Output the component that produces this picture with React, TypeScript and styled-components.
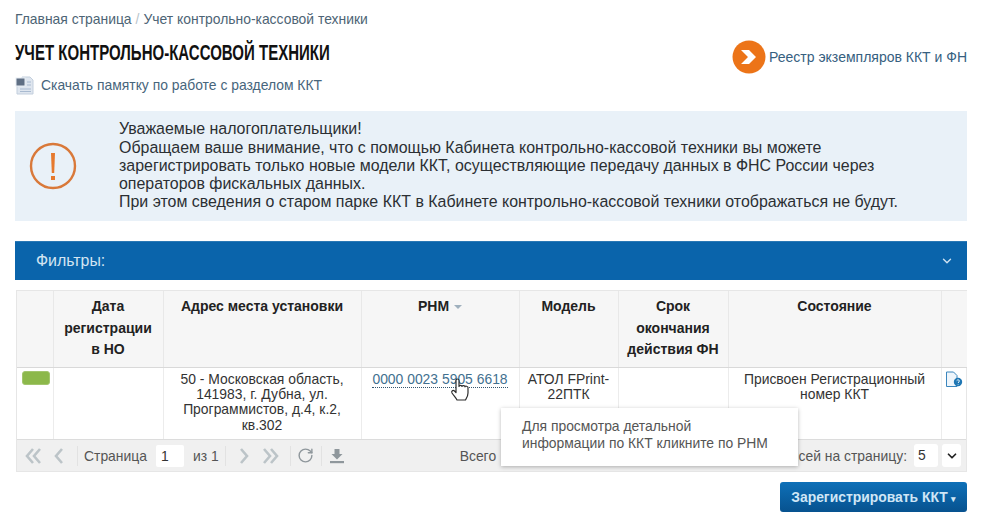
import { FC } from 'react';
import styled, { createGlobalStyle } from 'styled-components';
import { ChevronDown, RotateCw } from 'lucide-react';

const GlobalStyle = createGlobalStyle`
    html, body {
        margin: 0;
        padding: 0;
        background: #fff;
    }
    body {
        width: 983px;
        height: 523px;
        overflow: hidden;
        font-family: "Liberation Sans", Arial, sans-serif;
        color: #333;
    }
`;

const Page = styled.div`
    position: relative;
    box-sizing: border-box;
    height: 523px;
    padding: 11px 16px 0 15px;
`;

const Breadcrumbs = styled.div`
    font-size: 13.9px;
    line-height: 16px;
    color: #4d6475;
    span {
        color: #b9c4cc;
        margin: 0 4px;
    }
`;

const TitleRow = styled.div`
    display: flex;
    justify-content: space-between;
    align-items: center;
    margin-top: 14px;
    height: 32px;
`;

const Title = styled.h1`
    margin: 0 0 8px;
    font-size: 22px;
    font-weight: 700;
    line-height: 24px;
    color: #111;
    white-space: nowrap;
    transform: scaleX(0.683);
    transform-origin: left center;
`;

const RegistryLink = styled.a`
    display: flex;
    align-items: center;
    gap: 3px;
    font-size: 14px;
    color: #36607f;
`;

const DocLink = styled.a`
    display: flex;
    align-items: center;
    gap: 7px;
    margin-top: 0;
    height: 24px;
    font-size: 13.9px;
    color: #47657c;
`;

const InfoBox = styled.div`
    display: flex;
    align-items: center;
    box-sizing: border-box;
    height: 110px;
    margin-top: 14px;
    background: #e9f1f8;
    font-size: 15.95px;
    line-height: 18.2px;
    color: #2b2f33;
`;

const InfoIcon = styled.div`
    display: flex;
    justify-content: center;
    width: 76px;
    flex: none;
`;

const InfoText = styled.div`
    padding: 0 0 0 28px;
    white-space: nowrap;
`;

const FiltersBar = styled.div`
    display: flex;
    align-items: center;
    justify-content: space-between;
    box-sizing: border-box;
    height: 39px;
    margin-top: 20px;
    padding: 0 13px 0 21px;
    background: #0a64ab;
    border-top: 1px solid #2a78b5;
    color: #d3e4f2;
    font-size: 15.9px;
`;

const TableWrap = styled.div`
    margin: 10px 0 0 1px;
    border: 1px solid #e6e6e6;
    border-width: 1px 1px 0 1px;
`;

const GridTable = styled.table`
    width: 100%;
    border-collapse: collapse;
    table-layout: fixed;
    font-size: 13.9px;
`;

const HeadCell = styled.th`
    height: 76px;
    box-sizing: border-box;
    padding: 5px 6px 0;
    vertical-align: top;
    background: #f6f6f6;
    border-right: 1px solid #e8e8e8;
    border-bottom: 1px solid #d9d9d9;
    font-size: 14px;
    font-weight: 700;
    line-height: 21.7px;
    color: #222;
    &:last-child {
        border-right: 0;
    }
`;

const SortMark = styled.span`
    display: inline-block;
    margin-left: 5px;
    vertical-align: middle;
    border: 4px solid transparent;
    border-top: 4px solid #9fb0bd;
    border-bottom: 0;
`;

const BodyCell = styled.td`
    height: 72px;
    box-sizing: border-box;
    padding: 4px 8px 0;
    vertical-align: top;
    text-align: center;
    border-right: 1px solid #ececec;
    line-height: 15.4px;
    color: #333;
    &:last-child {
        border-right: 0;
    }
`;

const StatusChip = styled.div`
    width: 28px;
    height: 14px;
    margin: -1px 0 0 -3px;
    border-radius: 3px;
    background: #8cb84a;
    border: 1px solid #a2c56d;
    box-sizing: border-box;
`;

const RnmLink = styled.a`
    display: inline-block;
    margin-top: -1px;
    font-size: 13.9px;
    line-height: 16px;
    white-space: nowrap;
    color: #42708f;
    border-bottom: 1px dotted #35566e;
`;

const Pager = styled.div`
    display: flex;
    align-items: center;
    box-sizing: border-box;
    height: 33px;
    padding: 0 5px 0 5px;
    background: #f0f0f0;
    border-top: 1px solid #dcdcdc;
    border-bottom: 1px solid #e6e6e6;
    font-size: 13.9px;
    color: #555;
`;

const PagerBtn = styled.span<{ $w: number }>`
    display: flex;
    align-items: center;
    justify-content: center;
    width: ${(p) => p.$w}px;
    color: #b8c0c4;
`;

const PagerSep = styled.span`
    width: 1px;
    height: 20px;
    margin: 0 6px;
    background: #e2e2e2;
`;

const PageInput = styled.span`
    box-sizing: border-box;
    width: 28px;
    height: 22px;
    margin: 0 9px 0 9px;
    padding: 4px 0 0 5px;
    background: #fff;
    border-radius: 2px;
    color: #333;
    line-height: 15px;
`;

const TotalLabel = styled.span`
    margin-left: 114px;
`;

const PerPage = styled.span`
    margin-left: auto;
    white-space: nowrap;
`;

const PerPageValue = styled.span`
    box-sizing: border-box;
    width: 24px;
    height: 23px;
    margin-left: 7px;
    padding: 4px 0 0 4px;
    background: #fff;
    border-radius: 3px;
    color: #333;
    line-height: 15px;
`;

const PerPageArrow = styled.span`
    display: flex;
    align-items: center;
    justify-content: center;
    width: 19px;
    height: 23px;
    margin-left: 4px;
    background: #fff;
    border-radius: 3px;
    color: #222;
`;

const Tooltip = styled.div`
    position: absolute;
    left: 501px;
    top: 408px;
    box-sizing: border-box;
    width: 297px;
    height: 58px;
    padding: 10px 21px;
    background: #fff;
    box-shadow: 0 1px 4px rgba(0, 0, 0, 0.28);
    font-size: 13.9px;
    line-height: 16.5px;
    color: #555;
    white-space: nowrap;
`;

const Cursor = styled.svg`
    position: absolute;
    left: 450px;
    top: 378px;
`;

const Actions = styled.div`
    display: flex;
    justify-content: flex-end;
    margin-top: 10px;
`;

const RegisterButton = styled.button`
    box-sizing: border-box;
    width: 187px;
    height: 30px;
    padding: 0;
    border: 0;
    border-radius: 3px;
    background: linear-gradient(#0e70b8, #07528f);
    color: #cfe6f6;
    font-family: inherit;
    font-size: 13.9px;
    font-weight: 700;
    span {
        font-size: 9px;
        margin-left: 3px;
    }
`;

const columns = [36, 110, 198, 158, 99, 110, 213, 26];

const App: FC = () => {
    return (
        <Page>
            <GlobalStyle />
            <Breadcrumbs>Главная страница<span>/</span>Учет контрольно-кассовой техники</Breadcrumbs>
            <TitleRow>
                <Title>УЧЕТ КОНТРОЛЬНО-КАССОВОЙ ТЕХНИКИ</Title>
                <RegistryLink>
                    <svg width="34" height="34" viewBox="0 0 34 34">
                        <circle cx="17" cy="17" r="16.5" fill="#ec7418" />
                        <path d="M9 10h8l7 7-7 7H9l7-7z" fill="#fff" />
                    </svg>
                    Реестр экземпляров ККТ и ФН
                </RegistryLink>
            </TitleRow>
            <DocLink>
                <svg width="19" height="19" viewBox="0 0 19 19">
                    <path d="M7 1h8l3 3v14H2V9h5z" fill="#dfe6ef" stroke="#c3cfdd" />
                    <rect x="1" y="2" width="9" height="8" fill="#5f6f84" stroke="#e8edf3" />
                    <path d="M12 6h4M12 9h4M5 13h11M5 15.500h11" stroke="#a9bad0" />
                </svg>
                Скачать памятку по работе с разделом ККТ
            </DocLink>
            <InfoBox>
                <InfoIcon>
                    <svg width="48" height="48" viewBox="0 0 48 48">
                        <circle cx="24" cy="24" r="22" fill="none" stroke="#d9793a" strokeWidth="2.4" />
                        <path d="M22 11h4l-0.8 20h-2.400z" fill="#e6792e" />
                        <rect x="22" y="34" width="4" height="4" fill="#e6792e" />
                    </svg>
                </InfoIcon>
                <InfoText>
                    Уважаемые налогоплательщики!<br />
                    Обращаем ваше внимание, что с помощью Кабинета контрольно-кассовой техники вы можете<br />
                    зарегистрировать только новые модели ККТ, осуществляющие передачу данных в ФНС России через<br />
                    операторов фискальных данных.<br />
                    При этом сведения о старом парке ККТ в Кабинете контрольно-кассовой техники отображаться не будут.
                </InfoText>
            </InfoBox>
            <FiltersBar>
                Фильтры:
                <ChevronDown size={14} strokeWidth={2.4} color="#cfe2f1" />
            </FiltersBar>
            <TableWrap>
                <GridTable>
                    <colgroup>
                        {columns.map((w, key) => <col key={key} width={w} />)}
                    </colgroup>
                    <thead>
                        <tr>
                            <HeadCell />
                            <HeadCell>Дата регистрации в НО</HeadCell>
                            <HeadCell>Адрес места установки</HeadCell>
                            <HeadCell>РНМ<SortMark /></HeadCell>
                            <HeadCell>Модель</HeadCell>
                            <HeadCell>Срок окончания действия ФН</HeadCell>
                            <HeadCell>Состояние</HeadCell>
                            <HeadCell />
                        </tr>
                    </thead>
                    <tbody>
                        <tr>
                            <BodyCell><StatusChip /></BodyCell>
                            <BodyCell />
                            <BodyCell>50 - Московская область, 141983, г. Дубна, ул. Программистов, д.4, к.2, кв.302</BodyCell>
                            <BodyCell><RnmLink>0000 0023 5905 6618</RnmLink></BodyCell>
                            <BodyCell>АТОЛ FPrint-22ПТК</BodyCell>
                            <BodyCell />
                            <BodyCell>Присвоен Регистрационный номер ККТ</BodyCell>
                            <BodyCell>
                                <svg width="18" height="17" viewBox="0 0 18 17" style={{ margin: '-1px 0 0 -5px' }}>
                                    <path d="M1.500 1h7l3.500 3.500V15.500h-10.500z" fill="#eef5fb" stroke="#3b86bd" />
                                    <circle cx="13" cy="11" r="4.2" fill="#1f77b4" />
                                    <path d="M11.700 9.600c.5-1 2.800-1 2.700.4 0 1-1.300 1-1.300 2M13.100 13v.6" stroke="#fff" strokeWidth="0.9" fill="none" />
                                </svg>
                            </BodyCell>
                        </tr>
                    </tbody>
                </GridTable>
                <Pager>
                    <PagerBtn $w={24}>
                        <svg width="18" height="16" viewBox="0 0 18 16"><path d="M8 1 2 8l6 7M15 1 9 8l6 7" fill="none" stroke="#bcc4c8" strokeWidth="2.6" /></svg>
                    </PagerBtn>
                    <PagerBtn $w={25}>
                        <svg width="10" height="16" viewBox="0 0 10 16"><path d="M8 1 2 8l6 7" fill="none" stroke="#bcc4c8" strokeWidth="2.6" /></svg>
                    </PagerBtn>
                    <PagerSep />
                    Страница
                    <PageInput>1</PageInput>
                    из 1
                    <PagerSep />
                    <PagerBtn $w={24}>
                        <svg width="10" height="16" viewBox="0 0 10 16"><path d="m2 1 6 7-6 7" fill="none" stroke="#bcc4c8" strokeWidth="2.6" /></svg>
                    </PagerBtn>
                    <PagerBtn $w={28}>
                        <svg width="18" height="16" viewBox="0 0 18 16"><path d="m3 1 6 7-6 7M10 1l6 7-6 7" fill="none" stroke="#bcc4c8" strokeWidth="2.6" /></svg>
                    </PagerBtn>
                    <PagerSep />
                    <PagerBtn $w={18}><RotateCw size={17} strokeWidth={2} color="#8f979c" /></PagerBtn>
                    <PagerSep />
                    <PagerBtn $w={18}>
                        <svg width="16" height="16" viewBox="0 0 16 16">
                            <path d="M5.500 1h5v5h3L8 11.500 2.500 6h3z" fill="#8f979c" />
                            <rect x="1" y="13" width="14" height="2.200" fill="#8f979c" />
                        </svg>
                    </PagerBtn>
                    <TotalLabel>Всего</TotalLabel>
                    <PerPage>Записей на страницу:</PerPage>
                    <PerPageValue>5</PerPageValue>
                    <PerPageArrow><ChevronDown size={14} strokeWidth={3} /></PerPageArrow>
                </Pager>
            </TableWrap>
            <Actions>
                <RegisterButton>Зарегистрировать ККТ<span>▾</span></RegisterButton>
            </Actions>
            <Tooltip>Для просмотра детальной<br />информации по ККТ кликните по РНМ</Tooltip>
            <Cursor width="20" height="24" viewBox="0 0 20 24">
                <path d="M6 2.500c0-2 3-2 3 0v6c0-1.500 3-1.500 3 0 0-1.300 3-1.300 3 .3 0-1 3-.8 3 .8v5.400c0 3-1.500 5-2.500 7H7c-1-2-3-4-5-7-1-2 1-3.500 2.500-2l1.500 1.500z" fill="#fff" stroke="#2c2c2c" strokeWidth="1.200" strokeLinejoin="round" />
            </Cursor>
        </Page>
    );
};

export default App;
